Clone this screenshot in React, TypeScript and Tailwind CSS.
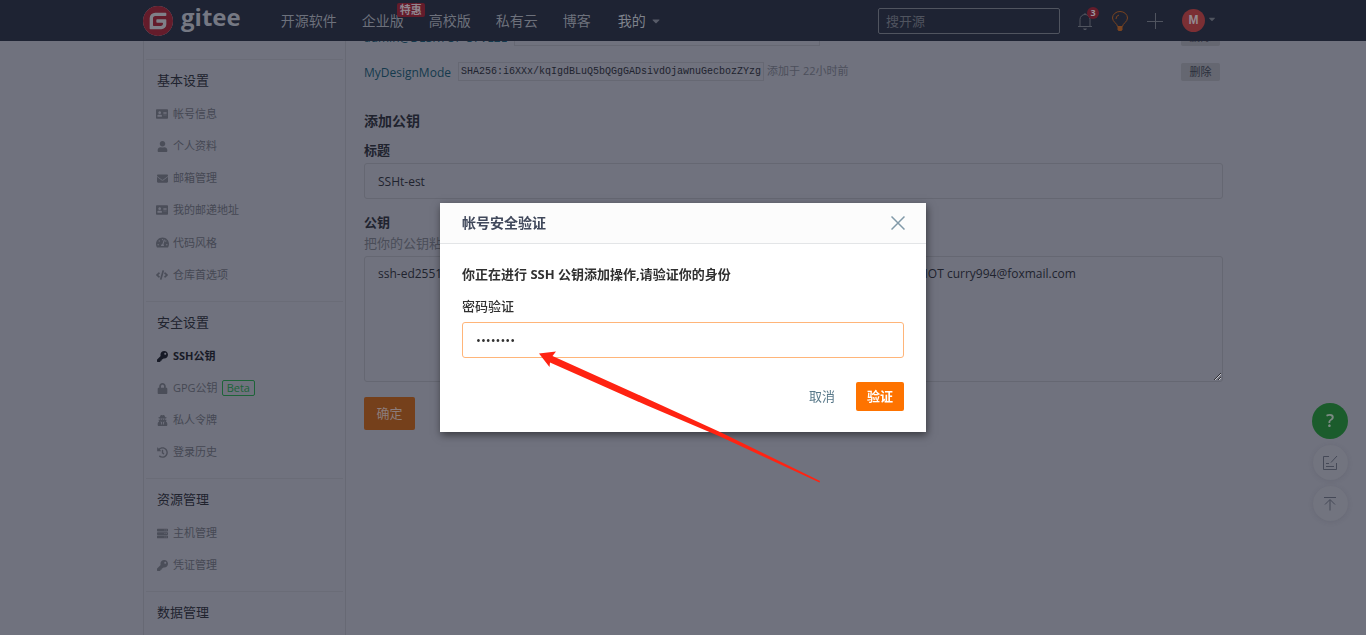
import type { ReactNode } from 'react';
import type { IconType } from 'react-icons';
import {
  FaAddressCard,
  FaCaretDown,
  FaCode,
  FaEnvelope,
  FaHistory,
  FaKey,
  FaLock,
  FaServer,
  FaTachometerAlt,
  FaUser,
  FaUserSecret,
} from 'react-icons/fa';
import { SiGitee } from 'react-icons/si';

interface MenuItem {
  label: string;
  icon: IconType;
  size?: number;
  active?: boolean;
  beta?: boolean;
}

const NAV_LINKS = ['开源软件', '企业版', '高校版', '私有云', '博客'];

const MENU: { title: string; items: MenuItem[] }[] = [
  {
    title: '基本设置',
    items: [
      { label: '帐号信息', icon: FaAddressCard, size: 12 },
      { label: '个人资料', icon: FaUser },
      { label: '邮箱管理', icon: FaEnvelope },
      { label: '我的邮递地址', icon: FaAddressCard, size: 12 },
      { label: '代码风格', icon: FaTachometerAlt, size: 13 },
      { label: '仓库首选项', icon: FaCode, size: 12 },
    ],
  },
  {
    title: '安全设置',
    items: [
      { label: 'SSH公钥', icon: FaKey, active: true },
      { label: 'GPG公钥', icon: FaLock, beta: true },
      { label: '私人令牌', icon: FaUserSecret },
      { label: '登录历史', icon: FaHistory },
    ],
  },
  {
    title: '资源管理',
    items: [
      { label: '主机管理', icon: FaServer },
      { label: '凭证管理', icon: FaKey },
    ],
  },
  { title: '数据管理', items: [] },
];

const KEYS = [
  { name: 'admin@DESKTOP-S7VE2L', hash: 'SHA256:x3HvMcn2wQz0kTsRvW8pmEuyyNa5oLd1/hXcKpQbvnt', added: '添加于 1天前' },
  { name: 'MyDesignMode', hash: 'SHA256:i6XXx/kqIgdBLuQ5bQGgGADsivdOjawnuGecbozZYzg', added: '添加于 22小时前' },
];

const PUBLIC_KEY =
  'ssh-ed25519 AAAAC3NzaC1lZDI1NTE5AAAAIKq0vYt7nXc2LwPj5hRb9sZuGdEoFaTyVkBi3rHxGw8nMOT curry994@foxmail.com';

export default function App() {
  return (
    <div className="flex h-screen flex-col bg-[#70727e] font-['Open_Sans','Noto_Sans_CJK_SC',sans-serif] text-[13px] text-[#20232e]">
      <Header />
      <div className="min-h-0 flex-1 overflow-hidden">
        <div className="mx-auto flex h-full max-w-[1080px]">
          <Sidebar />
          <KeyForm />
        </div>
      </div>
      <FloatingTools />
      <VerifyDialog />
      <PointerArrow />
    </div>
  );
}

function Header() {
  return (
    <header className="shrink-0 bg-[#1e2333]">
      <div className="mx-auto flex h-[41px] max-w-[1080px] items-center text-sm text-[#6d717c]">
        <a href="#" className="flex items-center gap-2" aria-label="gitee">
          <span className="rounded-full bg-[#7f8088]">
            <SiGitee size={30} className="text-[#641c2b]" />
          </span>
          <span className="pb-2 text-2xl leading-8 font-bold text-[#757883]">gitee</span>
        </a>
        <nav className="ml-10 flex items-center gap-[25px]">
          {NAV_LINKS.map((label) => (
            <a key={label} href="#" className="relative whitespace-nowrap">
              {label}
              {label === '企业版' && (
                <span className="absolute -top-2 left-[35px] rounded-[2px] bg-[#641c2b] px-[3px] text-[11px] leading-[14px] font-bold text-[#8f8790]">
                  特惠
                </span>
              )}
            </a>
          ))}
          <a href="#" className="ml-0.5 flex items-center gap-1 whitespace-nowrap text-[#7e828c]">
            我的
            <FaCaretDown size={12} className="text-[#575b68]" />
          </a>
        </nav>
        <div className="ml-auto flex items-center">
          <input
            type="search"
            aria-label="搜开源"
            placeholder="搜开源"
            className="h-[26px] w-[182px] rounded-[2px] border border-[#50545f] bg-transparent px-[7px] text-[13px] placeholder:text-[#50545f]"
          />
          <button type="button" aria-label="通知" className="relative ml-[17px] text-[#50545f]">
            <svg width="16" height="20" viewBox="0 0 16 20" fill="none" stroke="currentColor">
              <path d="M1 15.5h14M3 15.5V8.5a5 5 0 0 1 10 0v7M8 3.5V2" />
              <path d="M6 17.5h4l-1 1.5h-2z" fill="currentColor" stroke="none" />
            </svg>
            <span className="absolute -top-1 left-2.5 size-3 rounded-full bg-[#641c2b] text-[9px] leading-3 font-bold text-[#9a949c]">
              3
            </span>
          </button>
          <button type="button" aria-label="提示" className="ml-[18px] text-[#7a4420]">
            <svg width="18" height="20" viewBox="0 0 18 20" fill="none" stroke="currentColor">
              <path d="M6.5 15.5c0-3-5-4.500-5-8.500a7.500 6.500 0 0 1 15 0c0 4-5 5.500-5 8.500z" />
              <path d="M5 8a4 4 0 0 1 3-4" />
              <path d="M6.500 16h5v2.500l-1 1.500h-3l-1-1.500z" fill="currentColor" stroke="none" />
            </svg>
          </button>
          <button type="button" aria-label="新建" className="ml-[18px] text-[#50545f]">
            <svg width="16" height="16" viewBox="0 0 16 16" stroke="currentColor">
              <path d="M0 8.500h16M8.500 0v16" />
            </svg>
          </button>
          <button type="button" aria-label="帐号" className="mr-1.5 ml-[19px] flex items-center gap-[2px]">
            <span className="size-[23px] rounded-full bg-[#7b2f34] text-center font-['Liberation_Sans'] text-xs leading-[23px] font-bold text-[#948a91]">
              M
            </span>
            <FaCaretDown size={10} className="mb-1 text-[#50545f]" />
          </button>
        </div>
      </div>
    </header>
  );
}

function Sidebar() {
  return (
    <aside className="w-[203px] shrink-0 border-x border-[#676974] px-0.5 pt-[18px]">
      {MENU.map((section) => (
        <section key={section.title} className="border-t border-[#6a6c77] px-2.5 pb-2.5">
          <h2 className="h-[38px] pl-px leading-[40px]">{section.title}</h2>
          <ul className="text-[11px] leading-3 text-[#454853]">
            {section.items.map((item) => (
              <li key={item.label}>
                <SidebarLink {...item} />
              </li>
            ))}
          </ul>
        </section>
      ))}
    </aside>
  );
}

function SidebarLink({ label, icon: Icon, size = 11, active, beta }: MenuItem) {
  return (
    <a href="#" className={`flex items-center py-[10px] ${active ? 'font-bold text-[#171a26]' : ''}`}>
      <span className={`flex w-3 shrink-0 justify-center ${active ? '' : 'text-[#4b4e59]'}`}>
        <Icon size={size} className="shrink-0" />
      </span>
      <span className="ml-[5px]">{label}</span>
      {beta && (
        <span className="-my-1 ml-1 rounded-[2px] border border-[#1d6338] px-1 leading-[14px] text-[#1d6338]">
          Beta
        </span>
      )}
    </a>
  );
}

function KeyForm() {
  return (
    <main className="-mt-[22px] min-w-0 flex-1 pl-[18px]">
      <ul>
        {KEYS.map((key) => (
          <li key={key.name} className="flex h-[35px] items-center whitespace-nowrap">
            <a href="#" className="pt-0.5 text-xs text-[#143a4d]">
              {key.name}
            </a>
            <code className="ml-[7px] border border-[#666873] px-[2px] font-['Liberation_Mono'] text-[10px] leading-[17px]">
              {key.hash}
            </code>
            <span className="ml-[3px] text-[11px] text-[#4c4f5b]">{key.added}</span>
            <button
              type="button"
              className="mr-[3px] ml-auto h-[18px] w-[39px] rounded-[2px] bg-[#656771] text-[11px] leading-[18px] text-[#2b2f3c]"
            >
              删除
            </button>
          </li>
        ))}
      </ul>
      <form>
        <h3 className="mt-[22px] text-sm leading-5 font-bold">添加公钥</h3>
        <label htmlFor="key-title" className="mt-[9px] block leading-5 font-bold">
          标题
        </label>
        <input
          id="key-title"
          defaultValue="SSHt-est"
          className="mt-[3px] block h-9 w-full rounded-[3px] border border-[#656772] px-[13px] text-xs"
        />
        <label htmlFor="key-body" className="mt-[13px] block leading-5 font-bold">
          公钥
        </label>
        <p className="leading-[22px] text-[#4a4d58]">把你的公钥粘贴到这里,查看 怎样生成公钥</p>
        <textarea
          id="key-body"
          defaultValue={PUBLIC_KEY}
          className="mt-0.5 block h-[126px] w-full rounded-[3px] border border-[#656772] px-[13px] py-2 text-xs leading-[17px]"
        />
        <button type="button" className="mt-[15px] h-[33px] w-[51px] rounded-[2px] bg-[#75401b] text-[#8c7d7b]">
          确定
        </button>
      </form>
    </main>
  );
}

function ToolButton({ label, children }: { label: string; children: ReactNode }) {
  return (
    <button
      type="button"
      aria-label={label}
      className="flex size-[35px] items-center justify-center rounded-full bg-[#72747f] text-[#454957] shadow-[0_1px_5px_rgba(60,62,75,0.15)]"
    >
      {children}
    </button>
  );
}

function FloatingTools() {
  return (
    <div className="fixed right-[18px] bottom-[114px] flex flex-col items-center gap-[6px]">
      <button
        type="button"
        aria-label="帮助"
        className="size-9 rounded-full bg-[#1b5c2c] pb-0.5 text-lg font-semibold text-[#7b8a83]"
      >
        ?
      </button>
      <ToolButton label="反馈">
        <svg width="16" height="16" viewBox="0 0 16 16" fill="none" stroke="currentColor">
          <path d="M7 1.500H1.500v13h13V8M15 1L9 7.500M4 8.500h3M4 11.500h8" />
        </svg>
      </ToolButton>
      <ToolButton label="返回顶部">
        <svg width="14" height="16" viewBox="0 0 14 16" fill="none" stroke="currentColor">
          <path d="M1 1.500h12M7 14.500V4M2 8.500l5-5 5 5" />
        </svg>
      </ToolButton>
    </div>
  );
}

function VerifyDialog() {
  return (
    <div className="fixed inset-0 z-20 flex items-center justify-center">
      <div
        role="dialog"
        aria-labelledby="verify-title"
        className="w-[486px] bg-white shadow-[1px_3px_8px_rgba(0,0,0,0.5)]"
      >
        <div className="flex h-[41px] items-center justify-between border-b border-[#e3e5e7] bg-[#fcfcfc] pr-[21px] pl-[22px]">
          <h2 id="verify-title" className="text-sm font-bold text-[#40485b]">
            帐号安全验证
          </h2>
          <button type="button" aria-label="关闭" className="text-[#8199a8]">
            <svg width="14" height="14" viewBox="0 0 14 14" stroke="currentColor" strokeWidth="1.500">
              <path d="M0.500 0.500l13 13M13.500 0.500l-13 13" />
            </svg>
          </button>
        </div>
        <form className="px-[22px] pt-5 pb-[21px] text-[#303030]">
          <p className="leading-5 font-bold">你正在进行 SSH 公钥添加操作,请验证你的身份</p>
          <label htmlFor="password" className="mt-3 block leading-5 font-medium">
            密码验证
          </label>
          <input
            id="password"
            type="password"
            defaultValue="password"
            className="mt-1.5 block h-9 w-full rounded-[3px] border border-[#ffb579] px-[13px] text-[13px] outline-none"
          />
          <div className="mt-6 flex items-center justify-end gap-[21px]">
            <button type="button" className="text-[#587889]">
              取消
            </button>
            <button type="button" className="h-[29px] rounded-[2px] bg-[#fe7300] px-[11px] font-bold text-white">
              验证
            </button>
          </div>
        </form>
      </div>
    </div>
  );
}

// Hand-drawn pointer towards the password box.
function PointerArrow() {
  return (
    <div className="pointer-events-none fixed inset-0 z-30 flex items-center justify-center">
      <svg width="288" height="136" viewBox="0 0 288 136" className="relative top-[100px] shrink-0 fill-[#ff2312]">
        <path d="M0 3.500L17 1.500l-3.500 4.500L111 50l70 32L281 131l-.5 1.500L181 86.500l-73-31L11 12.500l-.5 4.500z" />
      </svg>
    </div>
  );
}
